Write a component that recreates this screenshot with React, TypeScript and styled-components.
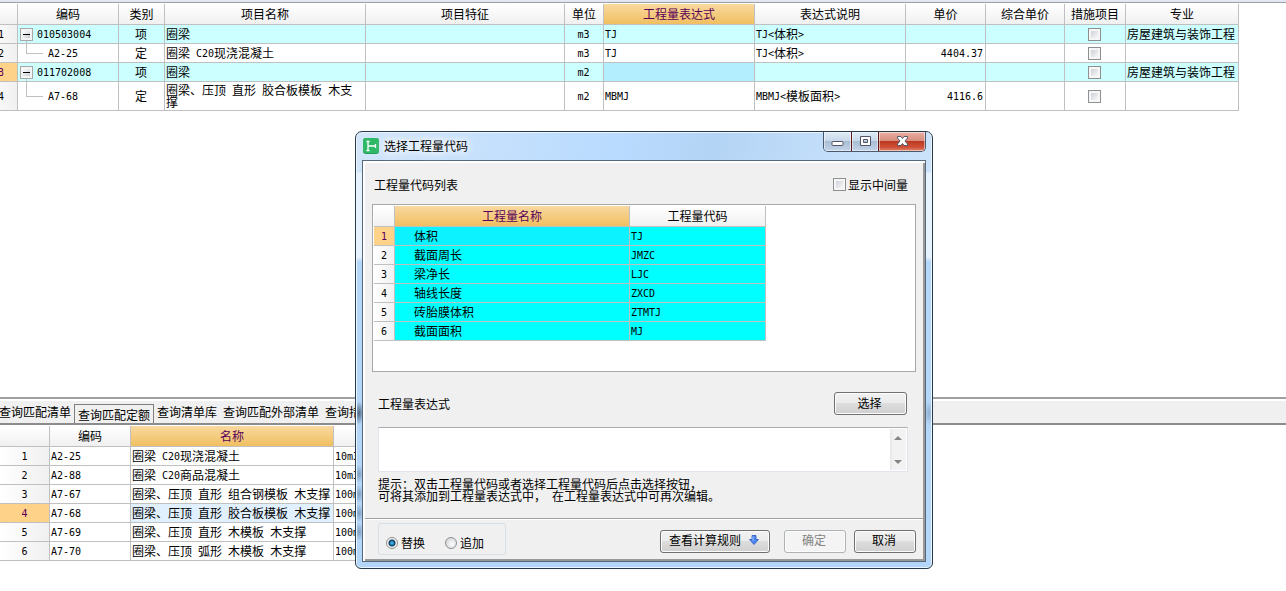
import React, { useState } from "react";
import styled, { createGlobalStyle, css } from "styled-components";

const GlobalStyle = createGlobalStyle`
  * { box-sizing: border-box; }
  body {
    margin: 0;
    background: #fff;
    color: #000;
    font: 12px/12px "Noto Sans CJK SC", sans-serif;
  }
  button, input, textarea { font: inherit; color: inherit; margin: 0; }
`;

const grid = "#c0c0c0";

/* ---------- text ---------- */

const Half = styled.span`
  font-family: "DejaVu Sans Mono", "Liberation Mono", monospace;
  font-size: 10px;
  line-height: 1px;
  vertical-align: 1px;
`;

/** Sets half-width characters in the 6px monospace face, the rest in the 12px face. */
function Txt({ children }: { children: string }) {
  return (
    <>
      {children.split(/([\x20-\x7e]+)/).map((run, i) =>
        i % 2 ? <Half key={i}>{run}</Half> : run
      )}
    </>
  );
}

/* ---------- page ---------- */

const Page = styled.div`
  position: relative;
  display: flex;
  flex-direction: column;
  min-height: 100vh;
  overflow: hidden;
`;

const TopPane = styled.section`
  flex: 1;
  border-top: 2px solid #e3e6f5;
  overflow: hidden;
`;

const TopRule = styled.div`
  height: 2px;
  border-top: 1px solid #a0a0a0;
`;

const BottomPane = styled.section`
  padding-bottom: 30px;
  overflow: hidden;
`;

/* ---------- data grids ---------- */

const Table = styled.table<{ $shift?: boolean }>`
  table-layout: fixed;
  width: 0;
  border-collapse: separate;
  border-spacing: 0;
  margin-left: ${(p) => (p.$shift ? "-15px" : "0")};
`;

const Th = styled.th<{ $active?: boolean }>`
  height: 21px;
  padding: 0;
  font-weight: normal;
  text-align: center;
  white-space: nowrap;
  overflow: hidden;
  border-right: 1px solid ${grid};
  border-bottom: 1px solid ${grid};
  background: linear-gradient(#fff, #f0f0f0);
  ${(p) =>
    p.$active &&
    css`
      color: #5a005a;
      background: linear-gradient(#f9d9a0, #f0bf60);
    `}
`;

type Align = "left" | "center" | "right";

const Td = styled.td<{ $align?: Align; $bg?: string; $wrap?: boolean; $indent?: boolean }>`
  height: 19px;
  padding: 0 2px 0 ${(p) => (p.$indent ? 19 : 1)}px;
  text-align: ${(p) => p.$align ?? "left"};
  white-space: ${(p) => (p.$wrap ? "normal" : "nowrap")};
  overflow: hidden;
  border-right: 1px solid ${grid};
  border-bottom: 1px solid ${grid};
  background: ${(p) => p.$bg ?? "transparent"};
`;

const RowHead = styled.th<{ $active?: boolean }>`
  height: 19px;
  padding: 0;
  font-weight: normal;
  text-align: center;
  border-right: 1px solid ${grid};
  border-bottom: 1px solid ${grid};
  color: ${(p) => (p.$active ? "#5a005a" : "#000")};
  background: ${(p) => (p.$active ? "#ffd28a" : "linear-gradient(90deg, #fff, #f0f0f0)")};
`;

const CheckBox = styled.input.attrs({ type: "checkbox" })`
  appearance: none;
  display: block;
  flex: none;
  width: 13px;
  height: 13px;
  border: 1px solid #8e8f8f;
  background: linear-gradient(135deg, #cdd1d9, #f8f8f8) content-box, #f6f6f6;
  padding: 2px;
`;

const CellCheck = styled(CheckBox)`
  margin: 0 auto;
`;

const Code = styled.div<{ $tall?: boolean }>`
  display: flex;
  align-items: center;
  height: ${(p) => (p.$tall ? 28 : 18)}px;
  padding-left: 1px;
`;

const Toggle = styled.button`
  position: relative;
  width: 13px;
  height: 13px;
  margin-right: 4px;
  padding: 2px;
  border: 1px solid #a8a8a8;
  background: linear-gradient(135deg, #fff, #c8ccd4) content-box, #f4f4f4;
  &::before {
    content: "";
    position: absolute;
    left: 2px;
    right: 2px;
    top: 5px;
    height: 1px;
    background: #000;
  }
  &::after {
    content: "";
    position: absolute;
    left: 5px;
    top: 12px;
    height: 3px;
    border-left: 1px solid ${grid};
  }
`;

const Branch = styled.span`
  align-self: flex-start;
  width: 17px;
  height: 55%;
  margin: 0 5px 0 6px;
  border-left: 1px solid ${grid};
  border-bottom: 1px solid ${grid};
`;

const topCols = [33, 101, 46, 201, 199, 39, 151, 151, 80, 79, 61, 113];
const topHeads = ["", "编码", "类别", "项目名称", "项目特征", "单位", "工程量表达式", "表达式说明", "单价", "综合单价", "措施项目", "专业"];

const topRows = [
  { code: "010503004", kind: "项", name: "圈梁", unit: "m3", expr: "TJ", note: "TJ<体积>", price: "", field: "房屋建筑与装饰工程" },
  { code: "A2-25", kind: "定", name: "圈梁 C20现浇混凝土", unit: "m3", expr: "TJ", note: "TJ<体积>", price: "4404.37", field: "" },
  { code: "011702008", kind: "项", name: "圈梁", unit: "m2", expr: "", note: "", price: "", field: "房屋建筑与装饰工程" },
  { code: "A7-68", kind: "定", name: "圈梁、压顶 直形 胶合板模板 木支撑", unit: "m2", expr: "MBMJ", note: "MBMJ<模板面积>", price: "4116.6", field: "" },
];

function Cols({ widths }: { widths: number[] }) {
  return (
    <colgroup>
      {widths.map((w, i) => (
        <col key={i} width={w} />
      ))}
    </colgroup>
  );
}

function ItemTable() {
  return (
    <Table $shift>
      <Cols widths={topCols} />
      <thead>
        <tr>
          {topHeads.map((h, i) => (
            <Th key={i} $active={i === 6}>{h}</Th>
          ))}
        </tr>
      </thead>
      <tbody>
        {topRows.map((r, i) => {
          const parent = r.kind === "项";
          const bg = parent ? "#ccffff" : "#fff";
          const tall = i === 3;
          return (
            <tr key={r.code}>
              <RowHead $active={i === 2}><Txt>{String(i + 1)}</Txt></RowHead>
              <Td $bg={bg}>
                <Code $tall={tall}>
                  {parent ? <Toggle aria-label="折叠" /> : <Branch />}
                  <span><Txt>{r.code}</Txt></span>
                </Code>
              </Td>
              <Td $bg={bg} $align="center">{r.kind}</Td>
              <Td $bg={bg} $wrap><Txt>{r.name}</Txt></Td>
              <Td $bg={bg} />
              <Td $bg={bg} $align="center"><Txt>{r.unit}</Txt></Td>
              <Td $bg={i === 2 ? "#b3eeff" : bg}><Txt>{r.expr}</Txt></Td>
              <Td $bg={bg}><Txt>{r.note}</Txt></Td>
              <Td $bg={bg} $align="right"><Txt>{r.price}</Txt></Td>
              <Td $bg={bg} />
              <Td $bg={bg}><CellCheck aria-label="措施项目" /></Td>
              <Td $bg={bg}>{r.field}</Td>
            </tr>
          );
        })}
      </tbody>
    </Table>
  );
}

/* ---------- query tabs ---------- */

const TabBar = styled.nav`
  display: flex;
  align-items: flex-end;
  height: 28px;
  border-top: 2px solid #a0a0a0;
  border-bottom: 2px solid #8c8c8c;
  background: linear-gradient(#fff 0, #fff 2px, #f0f0f0 2px);
  margin-bottom: 1px;
`;

const Tab = styled.button<{ $active?: boolean }>`
  height: 19px;
  padding: 0 3px 3px;
  border: 0;
  background: transparent;
  white-space: nowrap;
  &:first-child { margin-left: -4px; }
  ${(p) =>
    p.$active &&
    css`
      padding: 2px 3px 0;
      border: 1px solid #808080;
      border-bottom: 0;
    `}
`;

const tabs = ["查询匹配清单", "查询匹配定额", "查询清单库", "查询匹配外部清单", "查询措施"];

const quotaRows = [
  ["A2-25", "圈梁 C20现浇混凝土", "10m3"],
  ["A2-88", "圈梁 C20商品混凝土", "10m3"],
  ["A7-67", "圈梁、压顶 直形 组合钢模板 木支撑", "100m2"],
  ["A7-68", "圈梁、压顶 直形 胶合板模板 木支撑", "100m2"],
  ["A7-69", "圈梁、压顶 直形 木模板 木支撑", "100m2"],
  ["A7-70", "圈梁、压顶 弧形 木模板 木支撑", "100m2"],
];

function QuotaTable() {
  return (
    <Table>
      <Cols widths={[50, 81, 203, 80]} />
      <thead>
        <tr>
          <Th />
          <Th>编码</Th>
          <Th $active>名称</Th>
          <Th>单位</Th>
        </tr>
      </thead>
      <tbody>
        {quotaRows.map(([code, name, unit], i) => (
          <tr key={code}>
            <RowHead $active={i === 3}><Txt>{String(i + 1)}</Txt></RowHead>
            <Td><Txt>{code}</Txt></Td>
            <Td $bg={i === 3 ? "#e0f0ff" : undefined}><Txt>{name}</Txt></Td>
            <Td><Txt>{unit}</Txt></Td>
          </tr>
        ))}
      </tbody>
    </Table>
  );
}

/* ---------- dialog ---------- */

const Window = styled.div`
  position: absolute;
  left: 355px;
  top: 131px;
  width: 578px;
  padding: 0 6px 6px;
  border: 1px solid #27394a;
  border-radius: 7px 7px 6px 6px;
  box-shadow: inset 0 0 0 1px #eaf5ff;
  background:
    radial-gradient(ellipse 5px 12px at 3px 281px, #4d6680, transparent),
    radial-gradient(ellipse 5px 9px at 3px 342px, #7f9fbf, transparent),
    radial-gradient(ellipse 5px 9px at 3px 362px, #7f9fbf, transparent),
    radial-gradient(ellipse 5px 9px at 3px 381px, #7f9fbf, transparent),
    radial-gradient(ellipse 5px 9px at 3px 400px, #7f9fbf, transparent),
    radial-gradient(ellipse 5px 12px at 573px 281px, #8fb0cf, transparent),
    linear-gradient(transparent 40px, #e6f2fd 41px, #e6f2fd 125px, #b4d6f8 130px) no-repeat,
    linear-gradient(100deg, #d3e6f9, #b9dbff 40%, #b4d4f5 55%, #c4dffa 75%, #cfe5fa);
`;

const TitleBar = styled.header`
  display: flex;
  align-items: flex-start;
  height: 28px;
`;

const TitleIcon = styled.svg`
  margin: 6px 5px 0 1px;
`;

const Title = styled.h1`
  flex: 1;
  margin: 0;
  padding-top: 8px;
  font: inherit;
  text-shadow: 0 0 6px #fff, 0 0 10px #fff, 0 0 12px #fff;
`;

const Caption = styled.div`
  display: flex;
  height: 20px;
  border: 1px solid #4a5a6c;
  border-top: 0;
  border-radius: 0 0 5px 5px;
  overflow: hidden;
`;

const CaptionButton = styled.button<{ $close?: boolean }>`
  display: grid;
  place-items: center;
  width: ${(p) => (p.$close ? 47 : 27)}px;
  padding: 0;
  border: 0;
  box-shadow: inset 0 0 0 1px rgba(255, 255, 255, 0.5);
  background: ${(p) =>
    p.$close
      ? "linear-gradient(#e8b0a4, #d98d7e 45%, #bd3a22 50%, #cf5038 80%, #e08a6e)"
      : "linear-gradient(#dfebf7, #c9d9ea 45%, #a9bdd3 50%, #c2d5e9)"};
  & + & { border-left: 1px solid ${(p) => (p.$close ? "#5d1a14" : "#6f8093")}; }
`;

const Client = styled.div`
  border: 1px solid #56687a;
  background: #f0f0f0;
  box-shadow: inset 2px 2px 0 #fff, inset -2px -2px 0 #999;
  padding: 0 2px 2px;
`;

const Body = styled.div`
  padding: 17px 7px 16px;
`;

const ListCaption = styled.div`
  display: flex;
  align-items: center;
  justify-content: space-between;
  margin-bottom: 13px;
  padding: 0 8px 0 2px;
`;

const ExpressionBar = styled.div`
  display: flex;
  align-items: center;
  justify-content: space-between;
  padding: 20px 9px 12px 6px;
`;

const CheckLabel = styled.label`
  display: flex;
  align-items: center;
  gap: 2px;
`;

const ListBox = styled.div`
  height: 168px;
  padding: 1px 1px 0;
  border: 1px solid #a8a8a8;
  background: #fff;
`;

const Button = styled.button<{ $w: number }>`
  display: flex;
  align-items: center;
  justify-content: center;
  gap: 8px;
  width: ${(p) => p.$w}px;
  height: 23px;
  padding: 0 2px 2px 0;
  border: 1px solid #707070;
  border-radius: 3px;
  box-shadow: inset 0 0 0 1px #fcfcfc;
  background: linear-gradient(#f2f2f2, #ebebeb 48%, #dddddd 50%, #cfcfcf);
  &:disabled {
    color: #838383;
    border-color: #adb2b5;
    background: #f4f4f4;
  }
`;

const Editor = styled.div`
  display: flex;
  height: 45px;
  margin: 0 8px 6px 6px;
  border: 1px solid #e2e3ea;
  border-top-color: #abadb3;
  background: #fff;
`;

const Expression = styled.textarea`
  flex: 1;
  min-width: 0;
  padding: 2px;
  border: 0;
  outline: 0;
  resize: none;
  background: transparent;
`;

const Scroller = styled.div`
  display: flex;
  flex-direction: column;
  justify-content: space-between;
  width: 16px;
  margin: 1px;
  background: linear-gradient(90deg, #e6e6e6, #f2f2f2 20%);
`;

const ScrollButton = styled.button`
  display: grid;
  place-items: center;
  height: 17px;
  padding: 0;
  border: 0;
  background: transparent;
`;

const Hint = styled.p`
  margin: 0 6px;
  white-space: pre-line;
`;

const Footer = styled.footer`
  display: flex;
  align-items: center;
  gap: 8px;
  height: 41px;
  padding: 4px 7px 0 13px;
  border-top: 1px solid #a0a0a0;
  box-shadow: inset 0 1px 0 #fff;
`;

const Modes = styled.fieldset`
  display: flex;
  align-items: center;
  gap: 20px;
  width: 128px;
  height: 32px;
  margin: 0 auto 4px 0;
  padding: 8px 0 0 7px;
  border: 1px solid #d5dfe5;
  border-radius: 3px;
`;

const RadioLabel = styled.label`
  display: flex;
  align-items: center;
  gap: 3px;
`;

const Radio = styled.input.attrs({ type: "radio" })`
  appearance: none;
  width: 12px;
  height: 12px;
  border: 1px solid #8e8f8f;
  border-radius: 50%;
  background: radial-gradient(circle at 60% 60%, #fdfdfd, #c8ccd2);
  &:checked {
    background: radial-gradient(circle, #5fd0f5 0, #1673a8 2px, #0b3556 3px, #f4f4f4 4px);
  }
`;

const Spaced = styled.div`
  display: flex;
  gap: 14px;
`;

const codes = [
  ["体积", "TJ"],
  ["截面周长", "JMZC"],
  ["梁净长", "LJC"],
  ["轴线长度", "ZXCD"],
  ["砖胎膜体积", "ZTMTJ"],
  ["截面面积", "MJ"],
];

function CodeTable() {
  return (
    <Table>
      <Cols widths={[21, 235, 136]} />
      <thead>
        <tr>
          <Th />
          <Th $active>工程量名称</Th>
          <Th>工程量代码</Th>
        </tr>
      </thead>
      <tbody>
        {codes.map(([name, code], i) => (
          <tr key={code}>
            <RowHead $active={i === 0}><Txt>{String(i + 1)}</Txt></RowHead>
            <Td $indent $bg={i === 0 ? "#0cf3ff" : "#00ffff"}>{name}</Td>
            <Td $bg="#00ffff"><Txt>{code}</Txt></Td>
          </tr>
        ))}
      </tbody>
    </Table>
  );
}

function CodeDialog() {
  const [mode, setMode] = useState("replace");
  return (
    <Window role="dialog" aria-labelledby="dialog-title">
      <TitleBar>
        <TitleIcon width="16" height="16" viewBox="0 0 16 16">
          <rect width="16" height="16" rx="3" fill="#1f9d55" />
          <rect width="16" height="15" rx="3" fill="#2fb866" />
          <path d="M3.500 3.500H6.500M5 3.500V12.500M3.500 12.500H6.500M5 8H12M12.500 6V10" fill="none" stroke="#fff" strokeWidth="1.300" />
        </TitleIcon>
        <Title id="dialog-title">选择工程量代码</Title>
        <Caption>
          <CaptionButton aria-label="最小化">
            <svg width="13" height="20" viewBox="0 0 13 20">
              <rect x="1" y="9.500" width="11" height="4" rx="1" fill="#fff" stroke="#535666" />
            </svg>
          </CaptionButton>
          <CaptionButton aria-label="最大化">
            <svg width="13" height="20" viewBox="0 0 13 20">
              <path fillRule="evenodd" d="M1.500 4.500h10v9h-10zM4.500 7.500v3h4v-3z" fill="#fff" stroke="#535666" />
            </svg>
          </CaptionButton>
          <CaptionButton aria-label="关闭" $close>
            <svg width="13" height="20" viewBox="0 0 13 20">
              <path d="M1.500 4.500h3.500l1.500 2 1.500-2h3.500v1.500l-2.500 3 2.500 3v1.500h-3.500l-1.500-2-1.500 2h-3.500v-1.500l2.500-3-2.500-3z" fill="#fff" stroke="#535666" />
            </svg>
          </CaptionButton>
        </Caption>
      </TitleBar>
      <Client>
        <Body>
          <ListCaption>
            <span>工程量代码列表</span>
            <CheckLabel>
              <CheckBox />
              显示中间量
            </CheckLabel>
          </ListCaption>
          <ListBox>
            <CodeTable />
          </ListBox>
          <ExpressionBar>
            <label htmlFor="expression">工程量表达式</label>
            <Button $w={73}>选择</Button>
          </ExpressionBar>
          <Editor>
            <Expression id="expression" />
            <Scroller>
              <ScrollButton aria-label="向上">
                <svg width="8" height="4"><path d="M0 4L4 0L8 4z" fill="#858585" /></svg>
              </ScrollButton>
              <ScrollButton aria-label="向下">
                <svg width="8" height="4"><path d="M0 0L4 4L8 0z" fill="#858585" /></svg>
              </ScrollButton>
            </Scroller>
          </Editor>
          <Hint>
            <Txt>{"提示：双击工程量代码或者选择工程量代码后点击选择按钮，\n可将其添加到工程量表达式中， 在工程量表达式中可再次编辑。"}</Txt>
          </Hint>
        </Body>
        <Footer>
          <Modes>
            <RadioLabel>
              <Radio name="mode" checked={mode === "replace"} onChange={() => setMode("replace")} />
              替换
            </RadioLabel>
            <RadioLabel>
              <Radio name="mode" checked={mode === "append"} onChange={() => setMode("append")} />
              追加
            </RadioLabel>
          </Modes>
          <Spaced>
            <Button $w={110}>
              查看计算规则
              <svg width="10" height="10" viewBox="0 0 10 10">
                <path d="M3 .5h4v4h2.500L5 9.500.500 4.500H3z" fill="#4d86ee" stroke="#2a56c0" strokeWidth=".8" />
                <path d="M4 1.500v4" stroke="#a9c8ff" />
              </svg>
            </Button>
            <Button $w={62} disabled>确定</Button>
          </Spaced>
          <Button $w={62}>取消</Button>
        </Footer>
      </Client>
    </Window>
  );
}

export default function App() {
  return (
    <Page>
      <GlobalStyle />
      <TopPane>
        <TopRule />
        <ItemTable />
      </TopPane>
      <BottomPane>
        <TabBar>
          {tabs.map((t, i) => (
            <Tab key={t} $active={i === 1}>{t}</Tab>
          ))}
        </TabBar>
        <QuotaTable />
      </BottomPane>
      <CodeDialog />
    </Page>
  );
}
